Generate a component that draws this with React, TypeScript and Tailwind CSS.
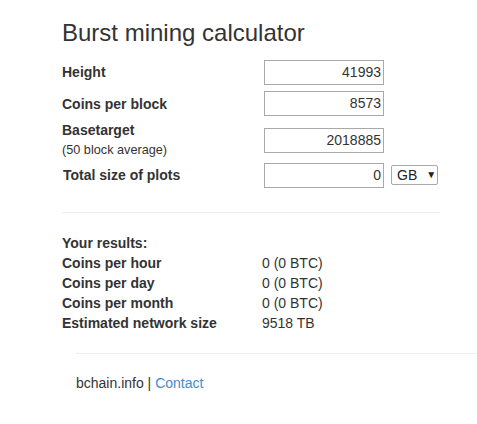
export default function App() {
  const results = [
    { label: 'Coins per hour', value: '0 (0 BTC)' },
    { label: 'Coins per day', value: '0 (0 BTC)' },
    { label: 'Coins per month', value: '0 (0 BTC)' },
    { label: 'Estimated network size', value: '9518 TB' },
  ];

  return (
    <div
      className="min-h-screen bg-white text-[14px] leading-[20px] text-[#333]"
      style={{ fontFamily: '"Liberation Sans", Arial, sans-serif' }}
    >
      <div className="w-[378px] ml-[62px]">
        {/* title */}
        <h3 className="mt-[20px] mb-[10px] text-[24px] leading-[26.4px] font-normal">
          Burst mining calculator
        </h3>

        {/* form */}
        <div className="flex flex-col">
          <div className="flex items-center h-[32px]">
            <label className="w-[202px] font-bold">Height</label>
            <div className="w-[120px] h-[25px] border border-[#a9a9a9] text-right pr-[2px] leading-[23px]">41993</div>
          </div>
          <div className="flex items-center h-[31px]">
            <label className="w-[202px] font-bold">Coins per block</label>
            <div className="w-[120px] h-[25px] border border-[#a9a9a9] text-right pr-[2px] leading-[23px]">8573</div>
          </div>
          <div className="flex items-center h-[42px]">
            <label className="w-[202px]">
              <span className="block font-bold">Basetarget</span>
              <span className="block text-[12.7px]">(50 block average)</span>
            </label>
            <div className="w-[120px] h-[25px] border border-[#a9a9a9] text-right pr-[2px] leading-[23px]">2018885</div>
          </div>
          <div className="flex items-center h-[28px]">
            <label className="w-[202px] font-bold pl-[1px]">Total size of plots</label>
            <div className="w-[120px] h-[25px] border border-[#a9a9a9] text-right pr-[2px] leading-[23px]">0</div>
            <div className="ml-[7px] w-[47px] h-[20px] border border-[#a9a9a9] rounded-[2px] flex items-center pl-[5px] text-[14px] text-[#222]">
              <span>GB</span>
              <span className="ml-[9px] text-[10px] leading-none">▼</span>
            </div>
          </div>
        </div>

        <div className="mt-[23px] border-t border-[#eee]" />

        {/* results */}
        <div className="mt-[20px]">
          <div className="font-bold">Your results:</div>
          {results.map((r) => (
            <div key={r.label} className="flex">
              <span className="w-[200px] font-bold">{r.label}</span>
              <span>{r.value}</span>
            </div>
          ))}
        </div>
      </div>

      {/* footer */}
      <div className="ml-[76px] mt-[20px] border-t border-[#eee]" />
      <div className="ml-[76px] mt-[19px]">
        bchain.info | <a className="text-[#428bca]">Contact</a>
      </div>
    </div>
  );
}
